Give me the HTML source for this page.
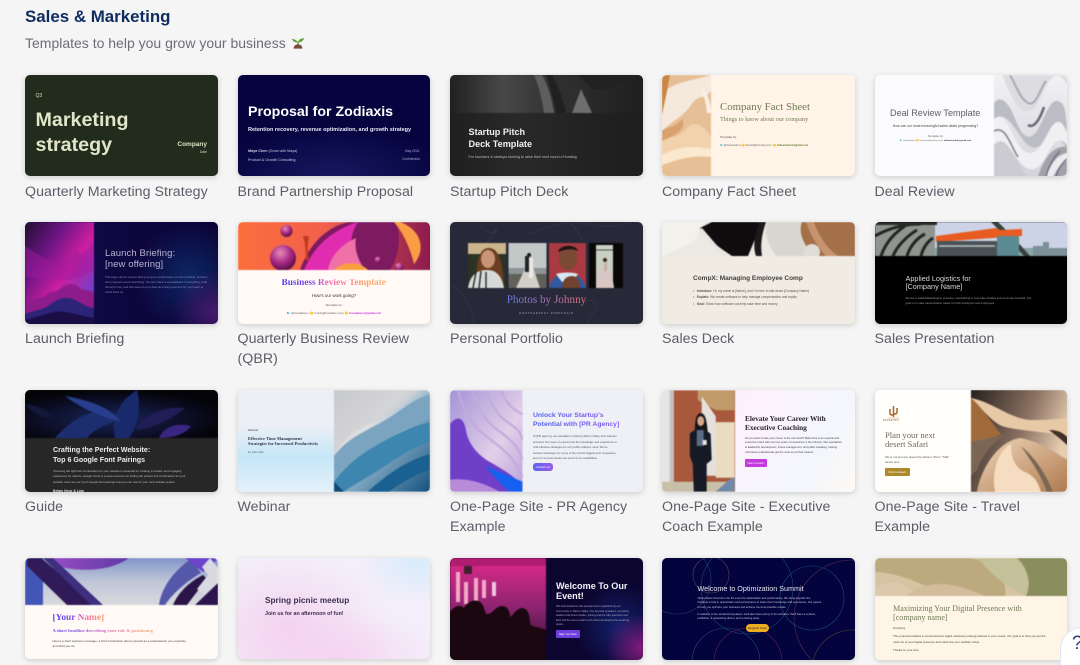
<!DOCTYPE html>
<html lang="en"><head><meta charset="utf-8"><title>Sales &amp; Marketing</title>
<style>
html,body{margin:0;padding:0;background:#f5f5f5;width:1080px;height:665px;overflow:hidden}
body{font-family:"Liberation Sans",sans-serif}
#p{position:absolute;left:0;top:0;width:1080px;height:665px;overflow:hidden}
.c{position:absolute;width:192.5px;height:101.5px;border-radius:5px;overflow:hidden;box-shadow:0 1.5px 6px rgba(0,0,0,.17);filter:blur(.3px)}
.c svg{position:absolute;filter:blur(.6px)}
.t{position:absolute;white-space:nowrap;line-height:1}
.l{position:absolute;white-space:nowrap;font-size:14.2px;line-height:20px;color:#5d5d68;letter-spacing:.05px;filter:blur(.2px)}
.s{font-family:"Liberation Serif",serif}
.b{position:absolute;border-radius:2px;color:#fff;font-size:3px;display:flex;align-items:center;justify-content:center}
.g{-webkit-background-clip:text;background-clip:text;color:transparent}
</style></head><body><div id="p">
<div class="t" style="left:25px;top:7px;font-size:16.9px;line-height:19px;font-weight:bold;color:#0f2c5f">Sales &amp; Marketing</div>
<div class="t" style="left:25px;top:35px;font-size:14px;line-height:17px;color:#6d6d78">Templates to help you grow your business</div>
<svg style="position:absolute;left:290.500px;top:35px" width="14" height="15" viewBox="0 0 16 16"><path d="M8 9C7 5 4 4 1 4c1 3 4 4 7 4zM8 9c0-4 3-6 7-6-1 3-3 5-7 5z" fill="#62a23a"/><path d="M8 7v4" stroke="#4d8a2e" stroke-width="1.2"/><path d="M3 15c0-3 2-5 5-5s5 2 5 5z" fill="#7a4b3c"/></svg>

<!-- ROW 1 -->
<div class="c" style="left:25px;top:74.5px;background:#212c1c">
<div class="t" style="left:10.5px;top:19px;font-size:5px;color:#d9dfc5">Q3</div>
<div class="t" style="left:10.5px;top:33px;font-size:19.7px;line-height:25px;font-weight:bold;color:#e1e5c9">Marketing<br>strategy</div>
<div class="t" style="right:10.5px;top:67.5px;font-size:6.5px;font-weight:bold;color:#dde2c6">Company</div>
<div class="t" style="right:10.5px;top:76.5px;font-size:3.4px;color:#d5dac0">Date</div>
</div>
<div class="c" style="left:237.5px;top:74.5px;background:radial-gradient(ellipse 120px 50px at 95px 100px,#17175f,#05043f 100%)">
<div class="t" style="left:10.5px;top:30px;font-size:14.2px;font-weight:bold;color:#fff">Proposal for Zodiaxis</div>
<div class="t" style="left:10.5px;top:53.5px;font-size:5.5px;color:#e8e8f4;font-weight:bold">Retention recovery, revenue optimization, and growth strategy</div>
<div class="t" style="left:10.5px;top:75.5px;font-size:3.7px;color:#c9c9e2"><b>Maya Chen</b> (Grow with Maya)</div>
<div class="t" style="left:10.5px;top:84px;font-size:3.7px;color:#c9c9e2">Product &amp; Growth Consulting</div>
<div class="t" style="right:10.5px;top:75px;font-size:3.3px;color:#aaaacd">May 2024</div>
<div class="t" style="right:10.5px;top:83px;font-size:3.3px;color:#aaaacd">Confidential</div>
</div>
<div class="c" style="left:450px;top:74.5px;background:linear-gradient(90deg,#1f1f1f,#292929 35%,#1d1d1d)">
<svg width="193" height="38" style="left:0;top:0" viewBox="0 0 193 38"><defs><linearGradient id="a1" x1="0" y1="0" x2="1" y2="0"><stop offset="0" stop-color="#1e1e1e"/><stop offset=".28" stop-color="#484848"/><stop offset=".55" stop-color="#303030"/><stop offset="1" stop-color="#1f1f1f"/></linearGradient></defs><rect x="-3" y="-3" width="199" height="44" fill="url(#a1)"/><path d="M84 0c6 14 8 26 10 38h10C102 24 98 10 92 0z" fill="#5e5e5e"/><path d="M96 0c4 12 8 26 10 38h10C113 24 108 10 102 0z" fill="#202020"/><path d="M122 38l9-24 11 24z" fill="#6e6e6e"/><path d="M104 0c6 8 14 14 26 12l-10 26h-4C114 24 112 10 108 0z" fill="#2e2e2e"/><path d="M128 0h60c-14 10-32 16-46 14z" fill="#222"/></svg>
<div class="t" style="left:18.5px;top:51px;font-size:9.1px;line-height:12.5px;font-weight:bold;color:#f2f2f2">Startup Pitch<br>Deck Template</div>
<div class="t" style="left:18.5px;top:81px;font-size:3.7px;color:#bdbdbd">For founders &amp; startups looking to raise their next round of funding</div>
</div>
<div class="c" style="left:662px;top:74.5px;background:#fff4e7">
<svg width="49" height="102" style="left:0;top:0" viewBox="0 0 49 102"><rect width="49" height="102" fill="#e7bf97"/><path d="M0 18C14 6 30 6 49 0v16c-8 10-12 2-20 14S10 46 0 56z" fill="#f4e9dc"/><path d="M0 0h8l-3 16L0 40z" fill="#c98642"/><path d="M35 8c8 6 14 16 14 30h-4C44 24 40 16 35 8z" fill="#f8f0e6"/><path d="M0 66c10-6 16-2 24-12s18-4 25 8v14c-12-6-26 0-49 10z" fill="#f2d2ac"/><path d="M0 80c16-8 30-10 49-6v8c-18-2-32 2-49 8z" fill="#fbe8cf"/><path d="M0 56c8-6 12-2 20-12 4 6 0 14-20 22z" fill="#d8a16e"/></svg>
<div class="t s" style="left:58px;top:27px;font-size:10.800px;color:#6e7a53">Company Fact Sheet</div>
<div class="t s" style="left:58px;top:42.5px;font-size:6.2px;color:#6e7a53">Things to know about our company</div>
<div class="t" style="left:58px;top:61px;font-size:3px;color:#555">Template by:</div>
<div class="t" style="left:58px;top:70.5px;font-size:2.5px;color:#666">🐦 @thewriterbot | 🟡 hannah@hannahy.com | 🟡 <b style="color:#6a7a30">hellowriterbot@gmail.com</b></div>
</div>
<div class="c" style="left:874.5px;top:74.5px;background:#fbfbfd">
<svg width="73" height="102" style="left:119.5px;top:0" viewBox="0 0 73 102"><defs><linearGradient id="a2" x1="0" y1="0" x2="0" y2="1"><stop offset="0" stop-color="#f2f2f5"/><stop offset="1" stop-color="#d2d2d8"/></linearGradient></defs><rect width="76" height="102" fill="url(#a2)"/><path d="M8 0c6 12 12 34 24 36S46 20 54 8s14-8 19 2V0z" fill="#dcdce1"/><path d="M0 28c8-10 16 2 22 18s14 22 22 8 12-30 20-28 7 14 9 22v26c-8-12-12-20-20-10S38 76 30 66 12 34 0 44z" fill="#bcbcc4"/><path d="M0 44c12-10 18 20 28 30s18 0 26-16 14-14 19 0v12c-8-10-14-2-20 10s-16 22-28 6S10 60 0 70z" fill="#f0f0f3"/><path d="M0 70c10-10 16 4 26 20s6 12 6 12H0z" fill="#cbcbd1"/><path d="M44 102c6-20 16-32 29-30v30z" fill="#a2a2ab"/><path d="M52 102c6-16 12-22 21-24v8c-6 2-10 8-14 16z" fill="#ececf0"/><path d="M16 0c6 10 10 24 18 28s12-14 18-22" fill="none" stroke="#a9a9b3" stroke-width="2"/><path d="M0 56c12-6 16 14 24 26" fill="none" stroke="#83838d" stroke-width="1.600"/><path d="M34 50c6 4 12-6 16-18" fill="none" stroke="#6a6a74" stroke-width="2.600"/><path d="M52 102c2-10 8-20 14-26M62 102c2-8 6-14 11-18" fill="none" stroke="#70707a" stroke-width="1.400"/></svg>
<div class="t" style="left:15.5px;top:34.5px;font-size:9.100px;color:#5f6066">Deal Review Template</div>
<div class="t" style="left:15px;top:50px;width:92px;text-align:center;font-size:3.5px;color:#444">How are our most meaningful sales deals progressing?</div>
<div class="t" style="left:15px;top:60px;width:92px;text-align:center;font-size:2.8px;color:#666">Template by:</div>
<div class="t" style="left:15px;top:65px;width:92px;text-align:center;font-size:2.2px;color:#666">🐦 @theadetto | 🟡 hannah@hannahy.com | <b style="color:#333">hellowriterbot@gmail.com</b></div>
</div>

<!-- ROW 2 -->
<div class="c" style="left:25px;top:222px;background:radial-gradient(ellipse 60px 60px at 190px 90px,#461a6c,transparent 70%),radial-gradient(ellipse 70px 70px at 165px 55px,#0d2664,transparent 80%),linear-gradient(90deg,#0b1050,#0e0740 50%,#0b0336)">
<svg width="69" height="102" style="left:0;top:0" viewBox="0 0 69 102"><defs><linearGradient id="b1" x1="0" y1="0" x2="1" y2="1"><stop offset="0" stop-color="#210f30"/><stop offset=".3" stop-color="#6d1585"/><stop offset=".55" stop-color="#cb1e9e"/><stop offset=".8" stop-color="#7a3cc4"/><stop offset="1" stop-color="#1d60e0"/></linearGradient></defs><rect width="69" height="102" fill="url(#b1)"/><path d="M0 24c16 12 40 26 50 4 8 8 18-4 19-8v28C50 62 24 60 0 54z" fill="#a01a9e" opacity=".5"/><path d="M0 82c6-2 8-6 14-6s8-6 14-6 10-8 18-8 8 6 14 6 6 2 9 2v32H0z" fill="#8e1c8a"/><path d="M0 92c10-4 18-4 26-10s16-8 24-4 14 8 19 8v16H0z" fill="#2c2478"/><path d="M0 98c14-4 20-6 30-8s18 2 39 6v6H0z" fill="#1a0e45"/></svg>
<div class="t" style="left:80px;top:26px;font-size:9.500px;line-height:11.200px;color:#b8b3cf;letter-spacing:.1px">Launch Briefing:<br>[new offering]</div>
<div class="t" style="left:80px;top:52.5px;font-size:2.850px;line-height:5px;color:#8f89ad">This page can be used to brief your go-to-market team on new products, services<br>and programs you're launching. You can share a consolidated of everything, read<br>through it live, and then keep it up to date as a living resource for your team to<br>check back on.</div>
</div>
<div class="c" style="left:237.5px;top:222px;background:#fffaf6">
<svg width="193" height="48" style="left:0;top:0" viewBox="0 0 193 48"><defs><linearGradient id="b2" x1="0" y1="0" x2="1" y2="0"><stop offset="0" stop-color="#fb6f3c"/><stop offset=".45" stop-color="#f25f4d"/><stop offset="1" stop-color="#8a1a4e"/></linearGradient><radialGradient id="b3" cx=".4" cy=".3" r=".7"><stop offset="0" stop-color="#e88ab6"/><stop offset=".6" stop-color="#a32582"/><stop offset="1" stop-color="#5a1042"/></radialGradient></defs><rect width="193" height="48" fill="url(#b2)"/><path d="M62 48C70 24 88 4 112 0h46c6 16 2 36-6 48z" fill="#7e1a60"/><path d="M66 48C76 24 94 8 120 0c-10 14-8 34 0 48z" fill="#e02cb0"/><path d="M90 48c2-14 14-26 28-32-2 10 2 24 10 32z" fill="#f070a8"/><path d="M156 0h6c22 8 26 28 14 42-4-16-10-30-20-42z" fill="#f99e45"/><path d="M96 48c8-8 24-10 34 0z" fill="#f9a03c"/><circle cx="45" cy="36" r="13" fill="url(#b3)"/><circle cx="48.500" cy="9" r="6" fill="url(#b3)"/><circle cx="140" cy="38" r="3.500" fill="url(#b3)"/><circle cx="161" cy="45" r="4.500" fill="url(#b3)"/><path d="M65 14c2 8 4 18 2 24h4c-2-8-1-18 0-24z" fill="#c23a1e"/></svg>
<div class="t s g" style="left:44px;top:57px;font-size:9.300px;font-weight:bold;background-image:linear-gradient(90deg,#4f3df0,#7f4be0 30%,#f06bb0 45%,#fda06c 80%,#fdb27a)">Business Review Template</div>
<div class="t" style="left:0;width:193px;top:71.5px;text-align:center;font-size:4.400px;color:#333">How's our work going?</div>
<div class="t" style="left:0;width:193px;top:81.5px;text-align:center;font-size:3.100px;color:#555">Template by:</div>
<div class="t" style="left:0;width:193px;top:90px;text-align:center;font-size:2.800px;color:#666">🐦 @bosslabsco | 🟡 bossla@bosslabs.com | 🟡 <b style="color:#c22ce0">bosslabsco@gmail.com</b></div>
</div>
<div class="c" style="left:450px;top:222px;background:#272838">
<svg width="193" height="102" style="left:0;top:0" viewBox="0 0 193 102"><g fill="none" stroke="#3c3f54" stroke-width=".6"><path d="M28 0c6 10 14 14 18 8s-4 12-22 24"/><path d="M78 12c30-10 40-14 50-12 12 2 40 12 64-6"/><path d="M0 62c14 8 22 24 24 40"/><path d="M132 80c16-4 20 0 4 22"/><path d="M120 0c6 6 10 14 12 20"/></g>
<rect x="18" y="21" width="38" height="45" fill="#2a3324"/><rect x="18" y="21" width="38" height="11" fill="#cbb48c"/><path d="M26 66c0-24 2-40 13-40s14 18 15 40z" fill="#6c3d20"/><ellipse cx="38" cy="37" rx="7" ry="9" fill="#c99478"/><path d="M18 66c2-12 8-18 19-18s15 8 17 18z" fill="#d8dad8"/><path d="M23 66l3-16M29 66l2-17M36 66v-16" stroke="#1e2a2c" stroke-width="1.400"/>
<rect x="58.500" y="21" width="38" height="45" fill="#c2c8c6"/><rect x="58.500" y="52" width="38" height="14" fill="#60625a"/><rect x="58.500" y="46" width="38" height="6" fill="#8d9496"/><path d="M66 66L80 36l10 30z" fill="#d2cfc8"/><rect x="75" y="34" width="4" height="16" fill="#23242a"/><rect x="79" y="36" width="4" height="20" fill="#ece9e2"/><circle cx="79" cy="33" r="2" fill="#1c1c1c"/>
<rect x="99" y="21" width="37" height="45" fill="#a93a42"/><path d="M99 66c2-10 8-14 18-14s16 4 19 14z" fill="#2f5a9e"/><path d="M106 52c6-2 16-2 22 0l-6 8h-10z" fill="#d8e8ef"/><ellipse cx="118" cy="36" rx="9" ry="12" fill="#7b4a35"/><path d="M108 30c2-8 18-8 20-1-6-3-12-2-20 1z" fill="#1d1214"/><path d="M112 66c0-8 4-12 10-12s8 6 8 12z" fill="#71432e"/>
<rect x="139" y="21" width="34" height="45" fill="#0a0807"/><rect x="146" y="23" width="17" height="43" fill="#c9cfc2"/><path d="M146 66c2-12 6-22 9-22s8 10 9 22z" fill="#d9c6c4"/><circle cx="155" cy="38" r="2" fill="#3b2a22"/><rect x="154" y="41" width="3" height="8" fill="#c7b0a4"/><path d="M146 28h17" stroke="#222" stroke-width=".7"/></svg>
<div class="t s g" style="left:0;top:72px;width:193px;text-align:center;font-size:11.200px;line-height:13px;background-image:linear-gradient(90deg,#5d76dc 27%,#9d7bc8 45%,#d9717f 70%)">Photos by Johnny</div>
<div class="t" style="left:0;width:193px;top:90px;text-align:center;font-size:2.800px;letter-spacing:.75px;color:#a8a8b8">PHOTOGRAPHY PORTFOLIO</div>
</div>
<div class="c" style="left:662px;top:222px;background:#f0ebe3">
<svg width="193" height="34" style="left:0;top:0" viewBox="0 0 193 34"><rect width="193" height="34" fill="#ece9e3"/><path d="M0 0h42l-10 20L0 34z" fill="#f2f1ec"/><path d="M38 6L50 0h50l-14 34H70C58 26 46 18 38 6z" fill="#0e0c0d"/><path d="M40 6l24 28h-4L36 8z" fill="#e8e6e2"/><path d="M105 0h45v34h-36c-8-12-12-22-9-34z" fill="#d9d6cf"/><path d="M104 0c-4 12-6 22-4 34h-6c-4-12 0-24 3-34z" fill="#1b1a1a"/><path d="M140 0h53v34h-40c-8-6-18-22-13-34z" fill="#a4704a"/><path d="M152 0c4 12 12 26 24 34h-12c-8-8-16-22-20-34z" fill="#c79470"/><circle cx="150" cy="30" r="8" fill="#e0ddd6"/></svg>
<div class="t" style="left:31px;top:53.5px;font-size:6.500px;font-weight:bold;color:#413f3c">CompX: Managing Employee Comp</div>
<div class="t" style="left:31px;top:65.5px;font-size:3.200px;line-height:6.500px;color:#575552">&bull;&nbsp;&nbsp;&nbsp;<b>Introduce:</b> Hi, my name is [Name], and I'm here to talk about [Company Name]<br>&bull;&nbsp;&nbsp;&nbsp;<b>Explain:</b> We create software to help manage compensation and equity<br>&bull;&nbsp;&nbsp;&nbsp;<b>Goal:</b> Show how software can help save time and money</div>
</div>
<div class="c" style="left:874.5px;top:222px;background:#000">
<svg width="193" height="34" style="left:0;top:0" viewBox="0 0 193 34"><rect width="193" height="34" fill="#cdd3e6"/><rect y="26" width="193" height="8" fill="#8aa4a8"/><path d="M0 0h60v34H0z" fill="#8e9490"/><path d="M6 34c4-12 12-22 24-30M18 34c4-10 14-20 24-26M32 34c3-10 10-18 18-22M46 34c2-8 6-14 12-18M0 14C14 6 30 2 46 2" stroke="#23251f" stroke-width="3" fill="none"/><path d="M0 0h62v3H0z" fill="#2a2c28"/><path d="M123 0c10 10 22 22 32 34h-6C138 22 126 10 116 0z" fill="#39413e"/><path d="M158 34v-10h10v-4h6v6h19v8z" fill="#7c9098"/><path d="M61 14l60-8 4 2 22-1v7l-86 6z" fill="#e85c22"/><rect x="62" y="19" width="60" height="15" fill="#4a5256"/><path d="M64 24h56" stroke="#b9c4c8" stroke-width="1.500"/><rect x="122" y="14" width="22" height="20" fill="#5b8a90"/></svg>
<div class="t" style="left:31px;top:52.5px;font-size:7.300px;line-height:8.400px;color:#d8d8d8">Applied Logistics for<br>[Company Name]</div>
<div class="t" style="left:31px;top:74px;font-size:2.800px;line-height:5px;color:#9a9a9a">We are a Sales/Marketing/etc company, specializing in corporate shuttles and commuter benefits. Our<br>goal is to make transportation easier for both employers and employees.</div>
</div>

<!-- ROW 3 -->
<div class="c" style="left:25px;top:390px;background:#272727">
<svg width="193" height="48" style="left:0;top:0" viewBox="0 0 193 48"><defs><radialGradient id="c1" cx=".45" cy=".6" r=".6"><stop offset="0" stop-color="#182658"/><stop offset=".7" stop-color="#0b0c22"/><stop offset="1" stop-color="#040408"/></radialGradient></defs><rect width="193" height="48" fill="url(#c1)"/><path d="M30 48C50 26 70 14 100 28 86 32 70 38 62 48z" fill="#1c2e70"/><path d="M90 48c-4-16 2-36 22-48 4 16 2 34-8 48z" fill="#182a6c"/><path d="M40 6c22 4 44 10 56 26C76 26 58 20 40 6z" fill="#263e8c"/><path d="M110 40c10-16 28-24 50-22-12 10-30 20-50 22z" fill="#201d58"/><path d="M134 48c4-10 16-16 32-12-4 6-14 12-32 12z" fill="#3a2580"/><path d="M0 14c12 2 24 6 30 14C16 28 8 24 0 14z" fill="#111838"/></svg>
<div class="t" style="left:28px;top:56px;font-size:7.100px;line-height:9.500px;font-weight:bold;color:#ececec">Crafting the Perfect Website:<br>Top 6 Google Font Pairings</div>
<div class="t" style="left:28px;top:79px;font-size:2.900px;line-height:5.300px;color:#bdbdbd">Choosing the right font combination for your website is essential for creating a modern and engaging<br>experience for visitors. Google Fonts is a great resource for finding the perfect font combination for your<br>website. Here are our top 6 Google Font pairings that you can use for your next website project.</div>
<div class="t" style="left:28px;top:99.500px;font-size:3.400px;font-weight:bold;color:#ddd">Bebas Neue &amp; Lato</div>
</div>
<div class="c" style="left:237.5px;top:390px;background:linear-gradient(180deg,#eeeef5,#ebeff6 35%,#c6e7f8 65%,#e4f1f9)">
<svg width="96.500" height="102" style="left:96px;top:0" viewBox="0 0 97 102"><defs><linearGradient id="c2" x1="0" y1="0" x2="1" y2="1"><stop offset="0" stop-color="#b4b8bc"/><stop offset=".35" stop-color="#dfe0e2"/><stop offset=".55" stop-color="#84aac4"/><stop offset="1" stop-color="#0f4f7c"/></linearGradient></defs><rect width="100" height="102" fill="url(#c2)"/><path d="M0 0h85C70 14 52 28 36 34 20 40 8 50 0 66z" fill="#d0d0d2" opacity=".7"/><path d="M0 66c14-18 30-24 48-34S80 8 97 4v24C78 34 62 44 44 56S14 74 0 92z" fill="#7ba4c0"/><path d="M0 92c18-24 40-36 60-46s28-12 37-14v20C76 58 58 72 42 82S18 96 10 102H0z" fill="#3c86b0"/><path d="M34 102c20-18 40-32 63-38v16c-14 4-28 12-42 22z" fill="#1a6090"/><path d="M0 92v10h10z" fill="#124a72"/></svg>
<div class="t" style="left:10.500px;top:39px;font-size:2.800px;color:#444">Webinar</div>
<div class="t s" style="left:10.500px;top:45.500px;font-size:4.300px;line-height:5px;font-weight:bold;color:#2f3342;letter-spacing:.08px">Effective Time Management<br>Strategies for Increased Productivity</div>
<div class="t" style="left:10.500px;top:60.500px;font-size:2.800px;color:#555">by John Doe</div>
</div>
<div class="c" style="left:450px;top:390px;background:#efeff6">
<svg width="72.500" height="102" style="left:0;top:0" viewBox="0 0 73 102"><defs><linearGradient id="c3" x1="0" y1="0" x2="1" y2="1"><stop offset="0" stop-color="#a392d8"/><stop offset=".6" stop-color="#e2cfe8"/><stop offset="1" stop-color="#b9a3da"/></linearGradient></defs><rect width="73" height="102" fill="url(#c3)"/><g fill="none" stroke="#c2abdc" stroke-width="2.200"><path d="M8 0c4 16 12 34 28 46s30 22 37 42"/><path d="M22 0c4 14 12 30 26 40s22 18 25 30"/><path d="M36 0c4 12 10 24 22 32s14 12 15 18"/><path d="M52 0c2 8 8 18 21 24"/></g><path d="M0 34c8-10 14-6 16 6s10 24 24 32 24 14 33 24v6H0z" fill="#6f3fc8"/><path d="M36 76l37 16v10H60C50 94 42 84 36 76z" fill="#1660f0"/><path d="M0 90c16-2 32 2 50 12H0z" fill="#b88ad8"/></svg>
<div class="t g" style="left:83px;top:21px;font-size:6.800px;line-height:9.400px;font-weight:bold;background-image:linear-gradient(90deg,#4f62f0,#8a58ea)">Unlock Your Startup's<br>Potential with [PR Agency]</div>
<div class="t" style="left:83px;top:44px;font-size:2.800px;line-height:5.500px;color:#55555f">At [PR agency], we specialize in helping Silicon Valley tech startups<br>succeed. Our team of experts has the knowledge and experience to<br>craft effective strategies for any public relations need. We've<br>helmed campaigns for some of the world's biggest tech companies,<br>and our success stories are proof of our capabilities.</div>
<div class="b" style="left:83px;top:72.500px;width:19.500px;height:8px;border-radius:3px;background:linear-gradient(90deg,#5d62ef,#9a5eea)">Contact us</div>
</div>
<div class="c" style="left:662px;top:390px;background:linear-gradient(120deg,#fbe6fb,#fdf2fb 40%,#f3f6fd 75%,#fdf9f3)">
<svg width="72.500" height="102" style="left:0;top:0" viewBox="0 0 73 102"><rect width="76" height="102" fill="#a8583c"/><rect x="0" width="8" height="102" fill="#e6e6e6"/><rect x="8" width="4" height="102" fill="#c4c0b8"/><path d="M36 0h37v20H54L36 10z" fill="#c09a68"/><path d="M40 6l14 20 2 60H40z" fill="#e4e0dc"/><rect x="54" y="32" width="19" height="56" fill="#eadcc0"/><rect x="0" y="92" width="73" height="10" fill="#c8bfa8"/><path d="M54 102l16-14h3v14z" fill="#6e8aa8"/><path d="M33 42c0-14 2-19 6-19s6 5 7 19z" fill="#16151a"/><ellipse cx="39" cy="31" rx="3.500" ry="5" fill="#d4a68a"/><path d="M28 44c3-6 16-6 21 0l1 26-5 4v28H32l-1-28-3-8z" fill="#151a24"/><rect x="35" y="40" width="7" height="16" fill="#5a6c84"/><rect x="41" y="50" width="4" height="5" fill="#e6e4dc"/></svg>
<div class="t s" style="left:83px;top:24px;font-size:7.300px;line-height:9px;font-weight:bold;color:#2a2430">Elevate Your Career With<br>Executive Coaching</div>
<div class="t" style="left:83px;top:46.500px;font-size:2.700px;line-height:4.800px;color:#444">Do you want to take your career to the next level? Maria Doe is an experienced<br>executive coach with over ten years of experience in the industry. She specializes<br>in leadership development, stress management, and public speaking, helping<br>mid-career professionals get the most out of their careers.</div>
<div class="b" style="left:83px;top:69px;width:21.500px;height:8px;border-radius:1px;background:#c33ade">Get in touch</div>
</div>
<div class="c" style="left:874.500px;top:390px;background:#fffefa">
<svg width="97" height="102" style="left:96px;top:0" viewBox="0 0 97 102"><defs><linearGradient id="c4" x1="0" y1="0" x2="1" y2=".4"><stop offset="0" stop-color="#26201e"/><stop offset=".6" stop-color="#8c7262"/><stop offset="1" stop-color="#e7cdb1"/></linearGradient><linearGradient id="c5" x1="0" y1="0" x2="1" y2="1"><stop offset="0" stop-color="#efd7ba"/><stop offset="1" stop-color="#b07a50"/></linearGradient></defs><rect width="97" height="102" fill="url(#c4)"/><path d="M0 8c22 4 40 22 62 22s26-2 35-2v18c-20-4-56-6-66-10S10 18 0 8z" fill="#e7c9a6"/><path d="M0 8c14 12 24 30 30 36L0 60z" fill="#a16a3a"/><path d="M0 52l36-8c-14 8-24 20-30 36L0 86z" fill="#7b6656"/><path d="M6 102c4-24 22-52 44-54 20 4 36 16 47 22v32z" fill="url(#c5)"/><path d="M24 102C20 80 28 60 40 54c0 14 4 24 14 28s14 12 16 20z" fill="#f6dcc0"/><path d="M50 56c14 12 24 26 32 46h-6C70 84 58 68 50 56z" fill="#7a6656"/><path d="M78 40c8 0 14 2 19 8v8c-8-8-14-12-19-16z" fill="#3f3029"/></svg>
<svg width="13" height="18" style="left:12px;top:15px;filter:none" viewBox="0 0 13 18"><path d="M6.500 1v11M3 4v4c0 2 1.500 2 3.500 2M10 3v4c0 2-1.500 2-3.500 2" stroke="#a9682c" stroke-width="1.500" fill="none"/><path d="M1 13h11" stroke="#c79a5c" stroke-width=".6"/></svg>
<div class="t" style="left:8.500px;top:30px;font-size:2.400px;letter-spacing:.3px;color:#8a6b3a">DESERTRIP</div>
<div class="t s" style="left:10.500px;top:41px;font-size:8.600px;line-height:9.400px;color:#6e6a58">Plan your next<br>desert Safari</div>
<div class="t" style="left:10.500px;top:65px;font-size:2.900px;line-height:5px;color:#555">We're not just any desert trip advisor. We're "THE"<br>desert pros.</div>
<div class="b" style="left:10.500px;top:78px;width:24.500px;height:8px;border-radius:1px;background:#ac8a2c">Find a desert</div>
</div>

<!-- ROW 4 -->
<div class="c" style="left:25px;top:558px;height:100.500px;background:#fffaf6">
<svg width="193" height="47" style="left:0;top:0" viewBox="0 0 193 47"><defs><linearGradient id="d1" x1="0" y1="0" x2="0" y2="1"><stop offset="0" stop-color="#8296c8"/><stop offset=".5" stop-color="#c0c6d8"/><stop offset="1" stop-color="#dadade"/></linearGradient><linearGradient id="d2" x1="0" y1="0" x2="1" y2="0"><stop offset="0" stop-color="#a04ec8"/><stop offset="1" stop-color="#5e3aa4"/></linearGradient></defs><rect width="193" height="47" fill="url(#d1)"/><rect width="18" height="47" fill="#4356b8"/><path d="M18 0h28c16 0 38 0 58 0-20 14-50 14-72 8z" fill="url(#d2)"/><path d="M2 0h14l56 47H42L2 8z" fill="#311a58"/><path d="M18 0h10l50 47H66z" fill="#3e2f80"/><path d="M134 47c2-16 14-34 32-46l10 14c-14 8-28 20-36 32z" fill="#5558a8"/><path d="M148 47c6-14 18-24 30-30l4 4c-8 10-14 18-20 26z" fill="#2a1448"/><path d="M160 0h32v2l-14 12z" fill="#6a44cc"/><path d="M170 47l23-22v22z" fill="#2c1450"/><path d="M185 0l8 10v15l-14 12-7-6 11-14-6-8z" fill="#d9d9e2"/></svg>
<div class="t s g" style="left:27.500px;top:56px;font-size:9.400px;font-weight:bold;background-image:linear-gradient(90deg,#4d3ef0,#8a50e0 40%,#f06bb0 60%,#fd9e6e 100%)">[Your Name]</div>
<div class="t s g" style="left:27.500px;top:71px;font-size:4.600px;font-weight:bold;background-image:linear-gradient(90deg,#4d3ef0,#d06ac0 50%,#fdae6c)">A short headline describing your role &amp; positioning</div>
<div class="t" style="left:27.500px;top:81px;font-size:3px;line-height:5.300px;color:#444">Here's a short welcome message, a brief introduction about yourself as a professional: you expertise,<br>and what you do.</div>
</div>
<div class="c" style="left:237.500px;top:558px;height:100.500px;background:radial-gradient(ellipse 100px 75px at 50px 72px,#f4d2ef,transparent 100%),radial-gradient(ellipse 60px 40px at 180px 5px,#d8ecfb,transparent 100%),radial-gradient(ellipse 100px 50px at 100px 100px,#f6d4f1,transparent 100%),#f3eefa">
<div class="t" style="left:27.500px;top:39px;font-size:8.200px;color:#3b2f52;font-weight:bold;letter-spacing:.05px">Spring picnic meetup</div>
<div class="t" style="left:27.500px;top:53.500px;font-size:5.300px;color:#3b2f52;font-weight:bold">Join us for an afternoon of fun!</div>
</div>
<div class="c" style="left:450px;top:558px;background:radial-gradient(ellipse 50px 50px at 190px 90px,#7d1a78,transparent 70%),radial-gradient(ellipse 50px 50px at 170px 70px,#12206a,transparent 90%),#0c0530">
<svg width="96" height="102" style="left:0;top:0" viewBox="0 0 96 102"><defs><linearGradient id="d3" x1="0" y1="0" x2="0" y2="1"><stop offset="0" stop-color="#e02a8a"/><stop offset=".5" stop-color="#8a2470"/><stop offset="1" stop-color="#22091c"/></linearGradient></defs><rect width="96" height="102" fill="url(#d3)"/><path d="M0 0h96v8H0z" fill="#b01c70"/><path d="M6 14h4v30H6zM14 24h4v22h-4zM24 20h4v24h-4zM32 22h4v18h-4z" fill="#f4a8c8"/><path d="M42 24h4v14h-4z" fill="#eec8e0"/><rect x="14" y="8" width="8" height="8" fill="#40202e"/><path d="M0 102V54c4-6 10-8 14-4 4-8 14-10 18-4s2 10 6 10 8-8 14-8 8 6 8 10 6-8 12-8 8 8 8 14 8 4 16 8v30z" fill="#1b0710"/></svg>
<div class="t" style="left:106px;top:23px;font-size:9.100px;line-height:10.300px;font-weight:bold;color:#f2f2f6">Welcome To Our<br>Event!</div>
<div class="t" style="left:106px;top:47px;font-size:2.700px;line-height:4.500px;color:#a9a6bc">We look forward to this special event organized by our<br>community in Silicon Valley. Our keynote speakers, a tenacity<br>leaders and brave breaks, joining and hot rally sponsors and<br>EAC will be ours to watch and others developing the amazing<br>topics.</div>
<div class="b" style="left:106px;top:72px;width:23.500px;height:7.500px;border-radius:1px;background:#6f3fe0">Sign Up Now</div>
</div>
<div class="c" style="left:662px;top:558px;background:#03033e">
<svg width="193" height="102" style="left:0;top:0;filter:none" viewBox="0 0 193 102"><g fill="none" stroke-width=".6"><circle cx="49" cy="17" r="18" stroke="#5a4060"/><circle cx="85" cy="30" r="46" stroke="#1e4a78"/><circle cx="15" cy="22" r="34" stroke="#1e3f70"/><circle cx="64" cy="104" r="34" stroke="#1e5070"/><circle cx="86" cy="104" r="34" stroke="#6a2050"/><circle cx="150" cy="40" r="32" stroke="#1e4a78"/><circle cx="190" cy="60" r="58" stroke="#5a3050"/><circle cx="190" cy="112" r="40" stroke="#5a4030"/></g></svg>
<div class="t" style="left:35.500px;top:26.500px;font-size:7.200px;color:#e4e4ee">Welcome to Optimization Summit</div>
<div class="t" style="left:35.500px;top:38.500px;font-size:2.750px;line-height:4.800px;color:#c7c7dc">Optimization Summit is the #1 event for optimization and performance. We bring together the<br>brightest minds in optimization and performance to share their knowledge and experience. Our goal is<br>to help you optimize your business and achieve the best possible results.</div>
<div class="t" style="left:35.500px;top:54.500px;font-size:2.750px;line-height:4.800px;color:#c7c7dc">In addition to the wonderful speakers, we'll also have plenty of fun activities. We'll have a contest,<br>exhibition, a networking dinner, and a closing party.</div>
<div class="b" style="left:84px;top:66px;width:23px;height:8px;border-radius:4px;background:#eeac20;color:#222">Register Now!</div>
</div>
<div class="c" style="left:874.500px;top:558px;background:#fff5e7">
<svg width="193" height="38" style="left:0;top:0" viewBox="0 0 193 38"><rect width="193" height="38" fill="#d6c3a2"/><path d="M0 0h90c24 0 44 20 40 38H70C50 26 20 14 0 14z" fill="#bda97e"/><path d="M0 30c14-8 24-6 34 0l10 8H0z" fill="#dcc9ac"/><path d="M103 0h39c14 4 14 22 10 38-12-4-34-18-49-38z" fill="#c3c09a"/><path d="M142 0h51v38h-42c6-12 2-28-9-38z" fill="#8a8d5e"/><path d="M30 38C50 24 70 20 110 38z" fill="#d2bc9c"/></svg>
<div class="t s" style="left:18.500px;top:45.500px;font-size:8.100px;line-height:9.500px;color:#6f7b58">Maximizing Your Digital Presence with<br>[company name]</div>
<div class="t" style="left:18.500px;top:68.500px;font-size:2.800px;color:#444">Hi [client],</div>
<div class="t" style="left:18.500px;top:76px;font-size:2.900px;line-height:5.500px;color:#444">This proposal outlines a comprehensive digital marketing strategy tailored to your needs. Our goal is to help you get the<br>most out of your digital presence and maximize your visibility online.</div>
<div class="t" style="left:18.500px;top:90.500px;font-size:2.800px;color:#444">Thanks for your time.</div>
</div>

<div class="l" style="left:25px;top:182px">Quarterly Marketing Strategy</div>
<div class="l" style="left:237.500px;top:182px">Brand Partnership Proposal</div>
<div class="l" style="left:450px;top:182px">Startup Pitch Deck</div>
<div class="l" style="left:662px;top:182px">Company Fact Sheet</div>
<div class="l" style="left:874.500px;top:182px">Deal Review</div>
<div class="l" style="left:25px;top:329px">Launch Briefing</div>
<div class="l" style="left:237.500px;top:329px">Quarterly Business Review<br>(QBR)</div>
<div class="l" style="left:450px;top:329px">Personal Portfolio</div>
<div class="l" style="left:662px;top:329px">Sales Deck</div>
<div class="l" style="left:874.500px;top:329px">Sales Presentation</div>
<div class="l" style="left:25px;top:497px">Guide</div>
<div class="l" style="left:237.500px;top:497px">Webinar</div>
<div class="l" style="left:450px;top:497px">One-Page Site - PR Agency<br>Example</div>
<div class="l" style="left:662px;top:497px">One-Page Site - Executive<br>Coach Example</div>
<div class="l" style="left:874.500px;top:497px">One-Page Site - Travel<br>Example</div>

<div style="position:absolute;left:1056px;top:623px;width:24px;height:42px;overflow:hidden"><div style="position:absolute;left:4px;top:4px;width:44px;height:38px;border-radius:22px 22px 0 0;background:#fff;border:1px solid #dfe6f4;border-bottom:0;box-sizing:border-box"></div></div>
<div class="t" style="left:1072px;top:634px;font-size:19px;color:#24406f">?</div>
</div></body></html>
